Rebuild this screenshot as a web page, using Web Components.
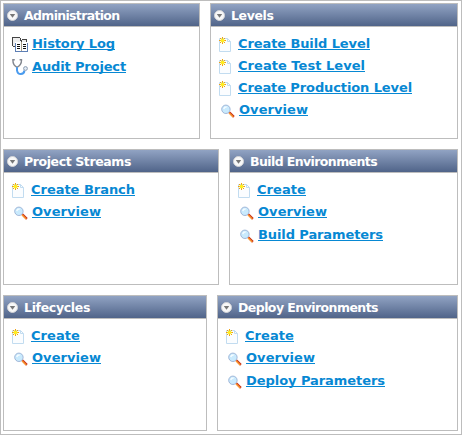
<!DOCTYPE html>
<html lang="en">
<head>
<meta charset="utf-8">
<title>Project</title>
<style>
html, body { margin: 0; background: #fff; }
body { font-family: "DejaVu Sans", Verdana, sans-serif; }
</style>
</head>
<body>
<project-board>
  <panel-row>
    <menu-panel label="Administration" tw="95.500" style="width:197px">
      <menu-link icon="log" tw="83">History Log</menu-link>
      <menu-link icon="audit" tw="94">Audit Project</menu-link>
    </menu-panel>
    <menu-panel label="Levels" tw="42.500" style="width:248px">
      <menu-link icon="page" tw="132">Create Build Level</menu-link>
      <menu-link icon="page" tw="127">Create Test Level</menu-link>
      <menu-link icon="page" tw="174">Create Production Level</menu-link>
      <menu-link icon="search" tw="69">Overview</menu-link>
    </menu-panel>
  </panel-row>
  <panel-row>
    <menu-panel label="Project Streams" tw="107" style="width:216px">
      <menu-link icon="page" tw="104">Create Branch</menu-link>
      <menu-link icon="search" tw="69">Overview</menu-link>
    </menu-panel>
    <menu-panel label="Build Environments" tw="127" style="width:229px">
      <menu-link icon="page" tw="49">Create</menu-link>
      <menu-link icon="search" tw="69">Overview</menu-link>
      <menu-link icon="search" tw="125">Build Parameters</menu-link>
    </menu-panel>
  </panel-row>
  <panel-row>
    <menu-panel label="Lifecycles" tw="66" style="width:204px">
      <menu-link icon="page" tw="49">Create</menu-link>
      <menu-link icon="search" tw="69">Overview</menu-link>
    </menu-panel>
    <menu-panel label="Deploy Environments" tw="140" style="width:241px">
      <menu-link icon="page" tw="49">Create</menu-link>
      <menu-link icon="search" tw="69">Overview</menu-link>
      <menu-link icon="search" tw="139">Deploy Parameters</menu-link>
    </menu-panel>
  </panel-row>
</project-board>
<script>
const icons = {
  log: `<svg width="16" height="16" viewBox="0 0 16 16" shape-rendering="crispEdges">
    <path d="M1 1h7v4H3v4H1zM10 3h4v2h-4z" fill="#eee"/>
    <path d="M0 0h8v1H1v8H0zM8 1h1v3H8zM9 3h1v2H9zM10 2h5v1h-5zM14 3h1v2h-1zM1 9h2v1H1z" fill="#444"/>
    <path d="M3 6h13v9H3z" fill="#5d7fb5"/><path d="M4 6h5v8H4zM10 6h5v8h-5z" fill="#fff"/><path d="M9 5h1v9H9z" fill="#a9a089"/>
    <path d="M5 7h3v1H5zM5 9h3v1H5zM5 11h3v1H5zM11 7h3v1h-3zM11 9h3v1h-3zM11 11h3v1h-3z" fill="#111"/></svg>`,
  audit: `<svg width="16" height="16" viewBox="0 0 16 16" fill="none">
    <path d="M2.800.7H.9Q.7 6 5 8.300 9.800 6 9.500.7H7.600" stroke="#83878f" stroke-width="1.400"/>
    <path d="M5 8.300v3Q5.600 15 8.800 15q3.200 0 3.700-3.500" stroke="#4a9bee" stroke-width="2"/>
    <circle cx="13.500" cy="9.500" r="1.900" fill="#e4edf7" stroke="#8a9aaf"/></svg>`,
  page: `<svg width="14" height="15" viewBox="0 0 14 15" fill="none">
    <path d="M.5 1.500h8l3 3v10H.5z" fill="#fbfdff" stroke="#c2dcf0"/><path d="M8.500 1.500v3h3" stroke="#c2dcf0"/>
    <path d="M3.500 0v7M0 3.500h7M1 1l5 5M6 1L1 6" stroke="#f0a010"/>
    <circle cx="3.500" cy="3.500" r="2" fill="#ffee22"/></svg>`,
  search: `<svg width="14" height="14" viewBox="0 0 14 14" fill="none">
    <path d="M8.300 8.300l4.600 4.600" stroke="#c8301a" stroke-width="2.200"/><path d="M8 8.800l4.200 4.200" stroke="#fb9a2c" stroke-width="1.300"/>
    <circle cx="4.900" cy="5.300" r="4.200" fill="#c9eafd" stroke="#a0b6d8"/><path d="M2.700 5Q3.500 3 5.700 3.100" stroke="#f6fcff" stroke-width="1.500"/></svg>`
};

// Spreads the letters of a label evenly over a given width.
function fit(el, length, width) {
  const natural = el.getBoundingClientRect().width;
  if (length && natural) el.style.letterSpacing = ((width - natural) / length) + 'px';
}

customElements.define('project-board', class extends HTMLElement {
  constructor() {
    super();
    this.attachShadow({ mode: 'open' }).innerHTML = `<style>
      :host { display: flex; flex-direction: column; gap: 10px; box-sizing: border-box; width: 462px; height: 435px;
        padding: 2px; border: 1px solid #bdbdbd; background: #fff; }
    </style><slot></slot>`;
  }
});

customElements.define('panel-row', class extends HTMLElement {
  constructor() {
    super();
    this.attachShadow({ mode: 'open' }).innerHTML = `<style>
      :host { display: flex; gap: 10px; height: 136px; }
    </style><slot></slot>`;
  }
});

customElements.define('menu-panel', class extends HTMLElement {
  constructor() {
    super();
    this.attachShadow({ mode: 'open' }).innerHTML = `<style>
      :host { display: block; box-sizing: border-box; height: 136px; border: 1px solid #bdbdbd; flex: none; }
      header { display: flex; align-items: center; height: 22px; border-bottom: 1px solid #bdbdbd;
        background: linear-gradient(#91a3c3, #506489); color: #fff; font-weight: bold; font-size: 12.500px; line-height: 22px; white-space: nowrap; }
      span { padding-top: 1px; line-height: 21px; }
      svg { margin: 0 6px 0 3px; flex: none; }
      section { padding: 6px 0 0 8px; }
    </style>
    <header><svg width="11" height="11" viewBox="0 0 11 11"><circle cx="5.500" cy="5.500" r="5" fill="#f8f8f8" stroke="#d2d3d6"/><path d="M2.800 4h5.400L5.500 7.700z" fill="#777"/></svg><span></span></header>
    <section><slot></slot></section>`;
  }
  connectedCallback() {
    const s = this.shadowRoot.querySelector('span');
    s.textContent = this.getAttribute('label');
    fit(s, s.textContent.length, +this.getAttribute('tw'));
  }
});

customElements.define('menu-link', class extends HTMLElement {
  constructor() {
    super();
    this.attachShadow({ mode: 'open' }).innerHTML = `<style>
      :host { display: flex; height: 22px; white-space: nowrap; }
      :host([icon="search"]), :host([icon="log"]), :host([icon="audit"]) { height: 23px; }
      i { display: block; flex: none; width: 19px; height: 22px; }
      svg { display: block; margin-top: 4px; }
      :host([icon="search"]) i { width: 18px; padding-left: 2px; }
      :host([icon="search"]) svg { margin-top: 5px; }
      :host([icon="log"]) i, :host([icon="audit"]) i { width: 20px; }
      :host([icon="audit"]) svg { margin-top: 3px; }
      a { display: block; font-weight: bold; font-size: 13px; line-height: 22px; color: #0788d3;
        text-decoration: underline; text-decoration-thickness: 1px; text-underline-offset: 1px; text-decoration-skip-ink: none; cursor: pointer; }
    </style><i></i><a><slot></slot></a>`;
  }
  connectedCallback() {
    this.shadowRoot.querySelector('i').innerHTML = icons[this.getAttribute('icon')];
    fit(this.shadowRoot.querySelector('a'), this.textContent.length, +this.getAttribute('tw'));
  }
});
</script>
</body>
</html>
